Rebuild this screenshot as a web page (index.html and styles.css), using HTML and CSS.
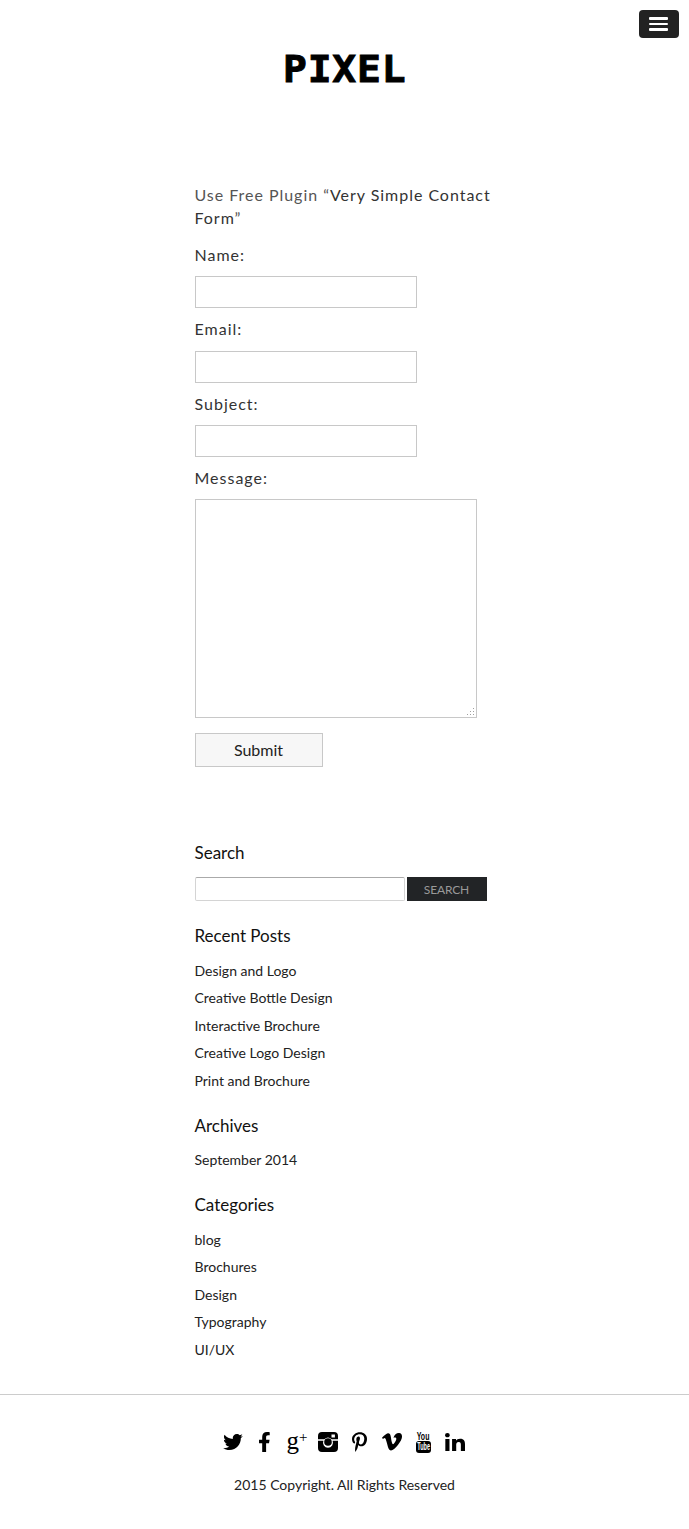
FILE: index.html
```html
<!DOCTYPE html>
<html lang="en">
<head>
<meta charset="utf-8">
<title>Pixel</title>
<link rel="stylesheet" href="styles.css">
</head>
<body>
<button class="menu-toggle" type="button" aria-label="Menu"><span></span><span></span><span></span></button>
<header class="site-header"><a class="logo">PIXEL</a></header>
<main class="column">
  <p class="intro"><span class="muted">Use Free Plugin “</span>Very Simple Contact Form<span class="muted">”</span></p>
  <form class="contact">
    <label class="field-label">Name:</label>
    <input class="text-input" type="text">
    <label class="field-label">Email:</label>
    <input class="text-input" type="text">
    <label class="field-label">Subject:</label>
    <input class="text-input" type="text">
    <label class="field-label">Message:</label>
    <div class="message-wrap">
      <textarea class="message"></textarea>
      <svg class="grip" viewBox="0 0 9 9"><path d="M7 1h1v1H7zM4 4h1v1H4zM7 4h1v1H7zM1 7h1v1H1zM4 7h1v1H4zM7 7h1v1H7z"/></svg>
    </div>
    <button class="submit" type="button">Submit</button>
  </form>
  <aside class="sidebar">
    <section class="widget widget-search">
      <h3>Search</h3>
      <div class="search-row"><input class="search-input" type="text"><button class="search-button" type="button">SEARCH</button></div>
    </section>
    <section class="widget">
      <h3>Recent Posts</h3>
      <ul><li>Design and Logo</li><li>Creative Bottle Design</li><li>Interactive Brochure</li><li>Creative Logo Design</li><li>Print and Brochure</li></ul>
    </section>
    <section class="widget">
      <h3>Archives</h3>
      <ul><li>September 2014</li></ul>
    </section>
    <section class="widget">
      <h3>Categories</h3>
      <ul><li>blog</li><li>Brochures</li><li>Design</li><li>Typography</li><li>UI/UX</li></ul>
    </section>
  </aside>
</main>
<footer class="site-footer">
  <div class="social">
    <span class="social-item"><svg class="ic ic-tw" viewBox="0 48 512 416"><path d="M459.37 151.716c.325 4.548.325 9.097.325 13.645 0 138.72-105.583 298.558-298.558 298.558-59.452 0-114.68-17.219-161.137-47.106 8.447.974 16.568 1.299 25.34 1.299 49.055 0 94.213-16.568 130.274-44.832-46.132-.975-84.792-31.188-98.112-72.772 6.498.974 12.995 1.624 19.818 1.624 9.421 0 18.843-1.3 27.614-3.573-48.081-9.747-84.143-51.98-84.143-102.985v-1.299c13.969 7.797 30.214 12.67 47.431 13.319-28.264-18.843-46.781-51.005-46.781-87.391 0-19.492 5.197-37.36 14.294-52.954 51.655 63.675 129.3 105.258 216.365 109.807-1.624-7.797-2.599-15.918-2.599-24.04 0-57.828 46.782-104.934 104.934-104.934 30.213 0 57.502 12.67 76.67 33.137 23.715-4.548 46.456-13.32 66.599-25.34-7.798 24.366-24.366 44.833-46.132 58.102 21.117-2.273 41.584-8.122 60.426-16.243-14.292 20.791-32.161 39.308-52.628 54.253z"/></svg></span>
    <span class="social-item"><svg class="ic ic-fb" viewBox="22 0 272 512" preserveAspectRatio="none"><path d="M279.14 288l14.22-92.66h-88.91v-60.13c0-25.35 12.42-50.06 52.24-50.06h40.42V6.26S260.43 0 225.36 0c-73.22 0-121.08 44.38-121.08 124.72v70.62H22.89V288h81.39v224h100.17V288z"/></svg></span>
    <span class="social-item"><span class="ic-gp">g<span class="gp-plus">+</span></span></span>
    <span class="social-item"><svg class="ic ic-ig" viewBox="0 0 20 20"><path fill-rule="evenodd" d="M4 0h12a4 4 0 0 1 4 4v12a4 4 0 0 1-4 4H4a4 4 0 0 1-4-4V4a4 4 0 0 1 4-4zM0 7.2v1.6h5.4a5 5 0 1 0 9.2 0H20V7.2h-6.3a5.6 5.6 0 0 0-7.4 0zM10 6.2a3.8 3.8 0 1 1 0 7.6a3.8 3.8 0 0 1 0-7.6zM13.5 2.4v3h3.4v-3z"/><circle cx="10" cy="10" r="2.6"/></svg></span>
    <span class="social-item"><svg class="ic ic-pi" viewBox="0 0 384 512"><path d="M204 6.5C101.4 6.5 0 74.9 0 185.6 0 256 39.6 296 63.6 296c9.9 0 15.6-27.6 15.6-35.4 0-9.3-23.7-29.1-23.7-67.8 0-80.4 61.2-137.4 140.4-137.4 68.1 0 118.5 38.7 118.5 109.8 0 53.1-21.3 152.7-90.3 152.7-24.9 0-46.2-18-46.2-43.8 0-37.8 26.4-74.4 26.4-113.4 0-66.2-93.9-54.2-93.9 25.8 0 16.8 2.1 35.4 9.6 50.7-13.8 59.4-42 147.9-42 209.1 0 18.9 2.7 37.5 4.5 56.4 3.4 3.8 1.7 3.4 6.9 1.5 50.4-69 48.6-82.5 71.4-172.8 12.3 23.4 44.1 36 69.3 36 106.2 0 153.9-103.5 153.9-196.8C384 71.3 298.2 6.5 204 6.5z"/></svg></span>
    <span class="social-item"><svg class="ic ic-vi" viewBox="0 62 448 392"><path d="M447.8 153.6c-2 43.6-32.4 103.3-91.4 179.1-60.9 79.2-112.4 118.8-154.6 118.8-26.1 0-48.2-24.1-66.3-72.3C100.3 250 85.3 174.3 56.2 174.3c-3.4 0-15.1 7.1-35.2 21.1L0 168.2c51.6-45.3 100.9-95.7 131.8-98.5 34.9-3.4 56.3 20.5 64.4 71.5 28.7 181.5 41.4 208.9 93.6 126.7 18.7-29.6 28.8-52.1 30.2-67.6 4.8-45.9-35.8-42.8-63.3-31 22-72.1 64.1-107.1 126.2-105.1 45.8 1.2 67.5 31.1 64.9 89.4z"/></svg></span>
    <span class="social-item"><span class="ic-yt"><span class="yt-you">You</span><span class="yt-box"><span class="yt-tube">Tube</span></span></span></span>
    <span class="social-item"><svg class="ic ic-in" viewBox="0 0 448 448" preserveAspectRatio="none"><path d="M100.28 448H7.4V148.9h92.88zM53.79 108.1C24.09 108.1 0 83.5 0 53.8a53.79 53.79 0 0 1 107.58 0c0 29.7-24.1 54.3-53.79 54.3zM447.9 448h-92.68V302.4c0-34.7-.7-79.2-48.29-79.2-48.29 0-55.69 37.7-55.69 76.7V448h-92.78V148.9h89.08v40.8h1.3c12.4-23.5 42.69-48.3 87.88-48.3 94 0 111.28 61.9 111.28 142.3V448z"/></svg></span>
  </div>
  <p class="copyright">2015 Copyright. All Rights Reserved</p>
</footer>
</body>
</html>
```
FILE: styles.css
```css
* { box-sizing: border-box; }
html, body { margin: 0; padding: 0; }
body { position: relative; width: 689px; height: 1529px; overflow: hidden; background: #fff; font-family: "Lato", "Liberation Sans", sans-serif; color: #222; }
.menu-toggle { position: absolute; top: 10px; right: 10px; width: 40px; height: 28px; padding: 0 1px 0 0; border: 0; border-radius: 4px; background: #222; display: flex; flex-direction: column; align-items: center; justify-content: center; gap: 3px; }
.menu-toggle span { display: block; width: 19px; height: 2.5px; background: #fff; border-radius: 1px; }
.site-header { height: 183px; padding-top: 47px; text-align: center; }
.logo { display: block; width: max-content; margin: 0 auto; font-family: "DejaVu Sans Mono", "Liberation Mono", monospace; font-weight: 700; font-size: 37px; line-height: 46px; letter-spacing: .8px; color: #000; -webkit-text-stroke: .9px #000; transform: scaleX(1.07); }
.column { width: 300px; margin-left: 194.5px; }
.intro { margin: 0 0 14px; font-size: 16px; line-height: 23px; letter-spacing: .97px; color: #333; }
.muted { color: #555; }
.contact { display: flex; flex-direction: column; align-items: flex-start; }
.field-label { display: block; font-size: 16px; line-height: 23px; letter-spacing: 1px; color: #333; margin-bottom: 10.2px; }
.text-input { display: block; width: 222px; height: 32px; margin: 0 0 9.2px; border: 1px solid #c8c8c8; background: #fff; padding: 0; }
.message-wrap { position: relative; width: 282px; height: 219px; margin: 0 0 15px; }
.message { display: block; width: 282px; height: 219px; margin: 0; border: 1px solid #c8c8c8; background: #fff; padding: 0; resize: none; }
.grip { position: absolute; right: 2px; bottom: 2px; width: 9px; height: 9px; fill: #a0a0a0; }
.submit { width: 128px; height: 34px; border: 1px solid #c8c8c8; background: #f7f7f7; font-family: inherit; font-size: 16px; color: #222; padding: 0 0 1px; }
.sidebar { margin-top: 72px; }
.widget { margin-bottom: 17.5px; }
.widget-search { margin-bottom: 21px; }
.widget h3 { margin: 0 0 7.5px; padding-top: 1px; font-size: 17px; font-weight: 400; line-height: 26px; color: #111; }
.widget-search h3 { margin-bottom: 11px; }
.widget ul { list-style: none; margin: 0; padding: 0; }
.widget li { font-size: 14px; line-height: 27.5px; color: #222; }
.search-row { display: flex; gap: 2px; }
.search-input { width: 210px; height: 24px; border: 1px solid #d4d4d4; border-top-color: #aaa; border-radius: 2px; background: #fff; padding: 0; }
.search-button { width: 80px; height: 24px; border: 0; background: #222426; color: #999; font-family: inherit; font-size: 12px; letter-spacing: -.15px; padding: 0; }
.site-footer { position: absolute; top: 1394px; left: 0; width: 689px; border-top: 1px solid #ccc; }
.social { display: flex; justify-content: center; align-items: center; height: 24px; margin-top: 35px; padding-right: 1px; }
.social-item { display: flex; justify-content: center; align-items: center; width: 31.7px; height: 24px; }
.ic { display: block; fill: #000; }
.ic-tw { width: 20px; height: 16px; }
.ic-fb { width: 10.6px; height: 20px; }
.ic-gp { position: relative; display: block; width: 20px; height: 22px; font-family: "Liberation Serif", serif; font-size: 25px; line-height: 20px; color: #000; }
.gp-plus { position: absolute; top: -2px; left: 12.5px; font-size: 15px; line-height: 16px; }
.ic-ig { width: 20px; height: 20px; }
.ic-pi { width: 15px; height: 20px; }
.ic-vi { width: 20px; height: 17.5px; }
.ic-in { width: 20px; height: 18px; }
.ic-yt { display: flex; flex-direction: column; align-items: center; width: 15px; height: 21px; font-family: "Liberation Sans", sans-serif; font-weight: 700; }
.yt-you { flex: none; font-size: 10px; line-height: 9px; color: #000; white-space: nowrap; transform: scaleX(.7); }
.yt-box { display: flex; flex: none; justify-content: center; width: 15px; height: 12px; background: #000; border-radius: 3px; }
.yt-tube { flex: none; font-size: 10px; line-height: 12px; color: #fff; white-space: nowrap; transform: scaleX(.55); }
.copyright { margin: 21px 0 0; text-align: center; font-size: 14px; line-height: 20px; color: #222; }
```
